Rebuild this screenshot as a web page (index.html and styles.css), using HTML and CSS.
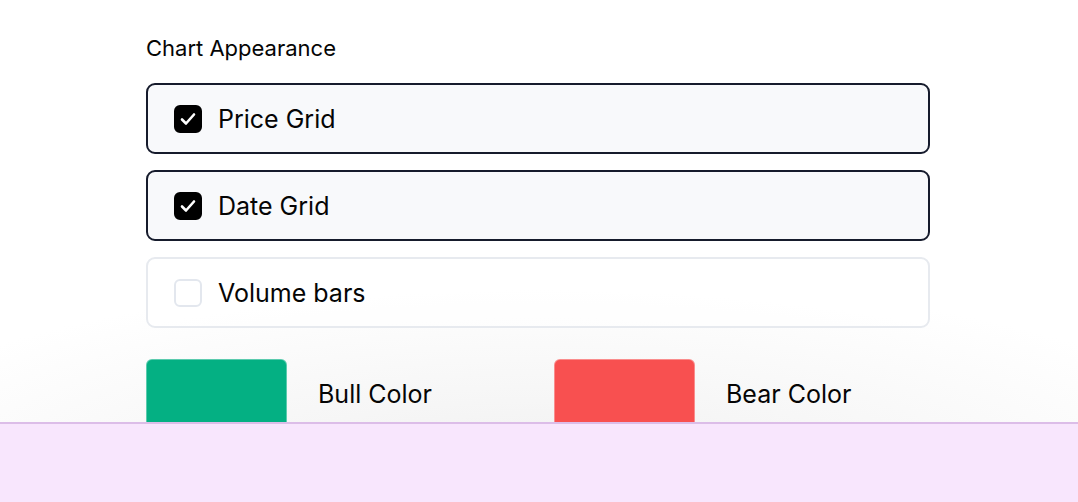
FILE: index.html
```html
<!DOCTYPE html>
<html lang="en">
<head>
    <meta charset="UTF-8">
    <meta name="viewport" content="width=device-width, initial-scale=1.0">
    <title>Chart Appearance</title>
    <link rel="stylesheet" href="styles.css">
</head>
<body>
    <div class="container">
        <h2 class="section-title">Chart Appearance</h2>
        <div class="options">
            <label class="option checked">
                <span class="box">
                    <svg viewBox="0 0 24 24" width="24" height="24"><path d="M6 12.5l4 4 8-9" fill="none" stroke="#fff" stroke-width="2.6" stroke-linecap="round" stroke-linejoin="round"/></svg>
                </span>
                <span class="option-label">Price Grid</span>
            </label>
            <label class="option checked">
                <span class="box">
                    <svg viewBox="0 0 24 24" width="24" height="24"><path d="M6 12.5l4 4 8-9" fill="none" stroke="#fff" stroke-width="2.6" stroke-linecap="round" stroke-linejoin="round"/></svg>
                </span>
                <span class="option-label">Date Grid</span>
            </label>
            <label class="option">
                <span class="box"></span>
                <span class="option-label">Volume bars</span>
            </label>
        </div>
        <div class="colors">
            <div class="color-item">
                <div class="swatch bull"></div>
                <span class="color-label">Bull Color</span>
            </div>
            <div class="color-item">
                <div class="swatch bear"></div>
                <span class="color-label">Bear Color</span>
            </div>
        </div>
    </div>
    <div class="bottom-bar"></div>
</body>
</html>
```

FILE: styles.css
```css
html, body {
    height: 100%;
}
body {
    margin: 0;
    font-family: Inter, "Noto Sans", Arial, sans-serif;
    color: #050505;
    background: radial-gradient(ellipse 70% 45% at 50% 100%, #eeeeee 0%, #f6f6f6 45%, #ffffff 100%);
    overflow: hidden;
}
.container {
    width: 784px;
    padding-top: 34px;
    margin-left: 146px;
}
.section-title {
    font-size: 22px;
    font-weight: 400;
    margin: 0 0 21px;
    line-height: 28px;
}
.options {
    display: flex;
    flex-direction: column;
    gap: 16px;
}
.option {
    display: flex;
    align-items: center;
    gap: 16px;
    height: 71px;
    box-sizing: border-box;
    padding: 0 26px;
    border: 2px solid #e7eaef;
    border-radius: 9px;
    background: rgba(255, 255, 255, 0.6);
}
.option.checked {
    border-color: #161b2c;
    background: #f8f9fb;
}
.box {
    width: 28px;
    height: 28px;
    box-sizing: border-box;
    border: 2px solid #e3e7ee;
    border-radius: 6px;
    background: #fff;
    display: flex;
    align-items: center;
    justify-content: center;
}
.option.checked .box {
    background: #000;
    border-color: #000;
}
.option-label {
    font-size: 25px;
    line-height: 30px;
}
.colors {
    display: grid;
    grid-template-columns: 1fr 1fr;
    gap: 32px;
    margin-top: 31px;
}
.color-item {
    display: flex;
    align-items: center;
    gap: 31px;
}
.swatch {
    width: 141px;
    height: 70px;
    box-sizing: border-box;
    border-radius: 6px;
    border: 1px solid rgba(255, 255, 255, 0.35);
}
.swatch.bull {
    background: #04b083;
}
.swatch.bear {
    background: #f85050;
}
.color-label {
    font-size: 25px;
    line-height: 30px;
}
.bottom-bar {
    position: fixed;
    left: 0;
    right: 0;
    bottom: 0;
    height: 78px;
    background: #f8e6fd;
    border-top: 2px solid #dcbde8;
}
```
